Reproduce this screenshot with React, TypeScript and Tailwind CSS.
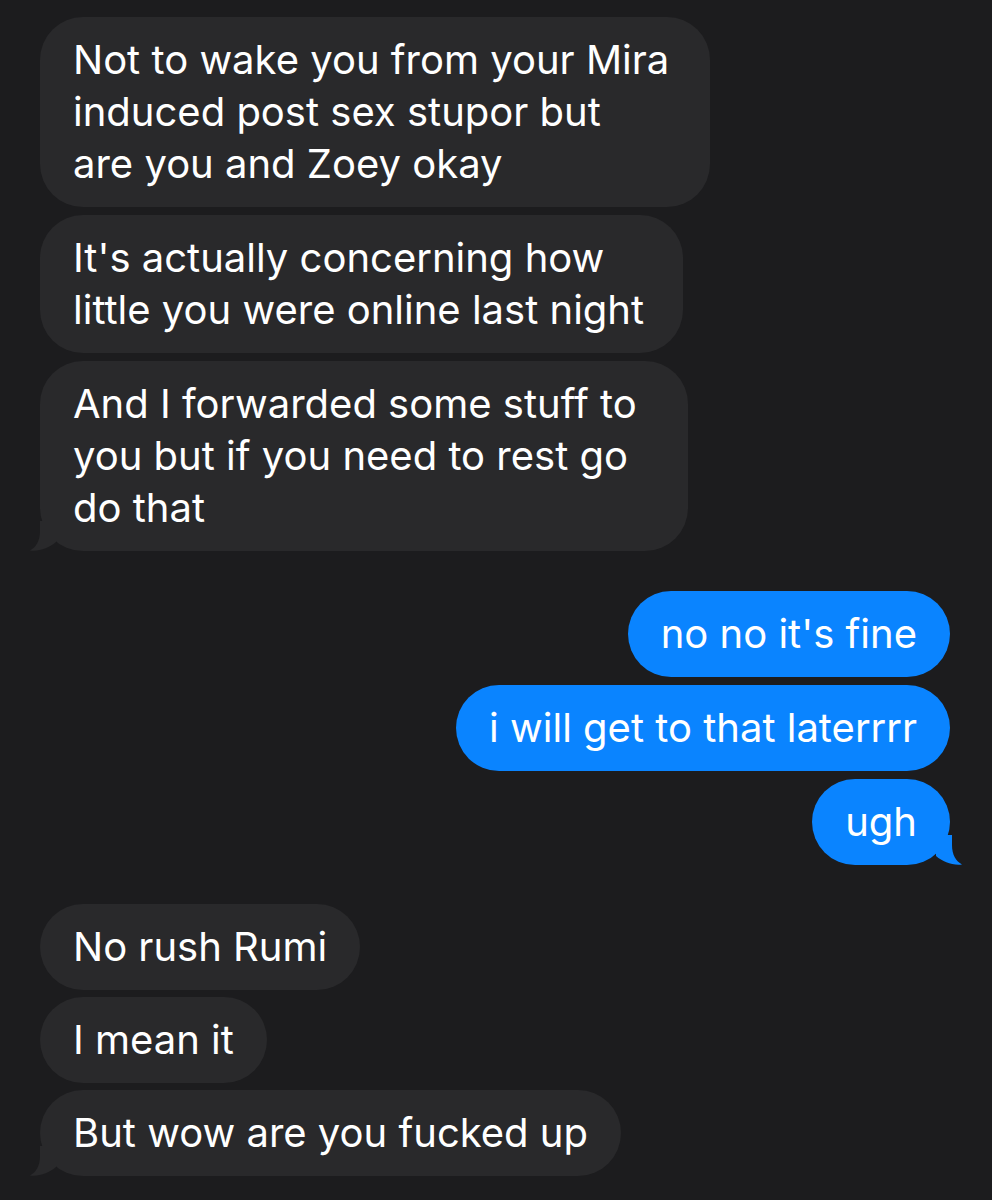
import React from 'react'

type Msg = { lines: string[]; tail?: boolean; w?: string }

const Tail = ({ color, flip }: { color: string; flip?: boolean }) => (
  <svg
    width="30"
    height="30"
    viewBox="0 0 30 30"
    className={`absolute bottom-0 ${flip ? '-right-[12px] -scale-x-100' : '-left-[10px]'}`}
  >
    <path d="M10,0 L10,10 C10,20 6,26 0,29.5 C10,30.5 19,27 26,21 L26,0 Z" fill={color} />
  </svg>
)

const Incoming = ({ lines, tail, w = '' }: Msg) => (
  <div className={`relative self-start rounded-[43px] bg-[#29292b] px-[33px] py-[17px] text-white ${w}`}>
    {lines.map((l, i) => (
      <div key={i} className="whitespace-nowrap">
        {l}
      </div>
    ))}
    {tail && <Tail color="#29292b" />}
  </div>
)

const Outgoing = ({ lines, tail }: Msg) => (
  <div className="relative self-end rounded-[43px] bg-[#0a84ff] px-[33px] py-[17px] text-white">
    {lines.map((l, i) => (
      <div key={i} className="whitespace-nowrap">
        {l}
      </div>
    ))}
    {tail && <Tail color="#0a84ff" flip />}
  </div>
)

export default function App() {
  return (
    <div
      className="flex h-[1200px] w-[992px] flex-col overflow-hidden bg-[#1c1c1e] pl-[40px] pr-[42px] pt-[17px] text-[40px] leading-[52px]"
      style={{ fontFamily: 'Inter, "Noto Sans", sans-serif' }}
    >
      {/* первая группа */}
      <div className="flex flex-col gap-[8px]">
        <Incoming
          w="w-[670px]"
          lines={['Not to wake you from your Mira', 'induced post sex stupor but', 'are you and Zoey okay']}
        />
        <Incoming w="w-[643px]" lines={["It's actually concerning how", 'little you were online last night']} />
        <Incoming
          w="w-[648px]"
          lines={['And I forwarded some stuff to', 'you but if you need to rest go', 'do that']}
          tail
        />
      </div>

      {/* мои ответы */}
      <div className="mt-[40px] flex flex-col gap-[8px]">
        <Outgoing lines={["no no it's fine"]} />
        <Outgoing lines={['i will get to that laterrrr']} />
        <Outgoing lines={['ugh']} tail />
      </div>

      {/* вторая группа */}
      <div className="mt-[39px] flex flex-col gap-[7px]">
        <Incoming lines={['No rush Rumi']} />
        <Incoming lines={['I mean it']} />
        <Incoming lines={['But wow are you fucked up']} tail />
      </div>
    </div>
  )
}
